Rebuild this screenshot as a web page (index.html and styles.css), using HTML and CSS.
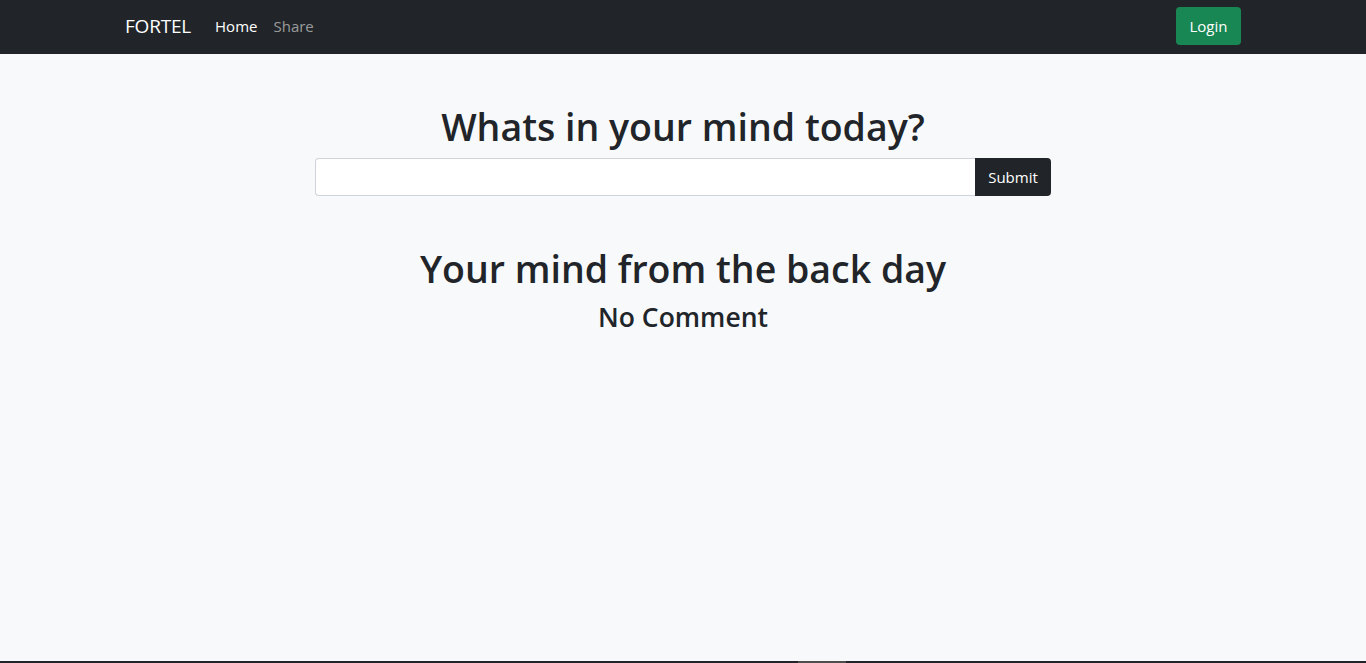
FILE: index.html
```html
<!DOCTYPE html>
<html lang="en">
<head>
<meta charset="utf-8">
<title>FORTEL</title>
<link rel="stylesheet" href="styles.css">
</head>
<body>
<nav class="navbar">
  <div class="container nav-inner">
    <div class="nav-left">
      <a class="brand" href="#">FORTEL</a>
      <a class="nav-link active" href="#">Home</a>
      <a class="nav-link" href="#">Share</a>
    </div>
    <a class="btn btn-login" href="#">Login</a>
  </div>
</nav>
<main class="main">
  <h1 class="title">Whats in your mind today?</h1>
  <form class="post-form">
    <input class="post-input" type="text">
    <button class="btn btn-submit" type="button">Submit</button>
  </form>
  <h1 class="title second">Your mind from the back day</h1>
  <h3 class="empty">No Comment</h3>
</main>
<footer class="footer"><div class="footer-mark"></div></footer>
</body>
</html>
```
FILE: styles.css
```css
* { box-sizing: border-box; }
html, body { margin: 0; padding: 0; }
body {
  height: 663px;
  overflow: hidden;
  display: flex;
  flex-direction: column;
  background: #f8f9fa;
  color: #212529;
  font-family: "Open Sans", "Noto Sans", sans-serif;
  font-size: 16px;
}
a { text-decoration: none; }
.navbar {
  background: #212529;
  padding: 7px 0 9px;
  height: 54px;
  flex: none;
}
.container {
  width: 1140px;
  margin: 0 auto;
  padding: 0 12px;
}
.nav-inner {
  display: flex;
  align-items: center;
  justify-content: space-between;
  height: 38px;
}
.nav-left { display: flex; align-items: center; }
.brand {
  color: #fff;
  font-size: 19px;
  margin-right: 16px;
  letter-spacing: -0.2px;
}
.nav-link {
  color: rgba(255,255,255,0.55);
  padding: 8px;
  font-size: 15px;
}
.nav-link.active { color: #fff; }
.btn {
  display: inline-flex;
  align-items: center;
  justify-content: center;
  height: 38px;
  padding: 0 12px;
  border-radius: 4px;
  font-size: 15px;
  font-family: inherit;
  color: #fff;
  border: none;
}
.btn-login { background: #198754; width: 65px; }
.main {
  flex: 1;
  display: flex;
  flex-direction: column;
  align-items: center;
  padding-top: 49px;
}
.title {
  margin: 0 0 7px;
  font-size: 37.5px;
  font-weight: 600;
  line-height: 48px;
}
.title.second { margin-top: 49px; }
.post-form {
  display: flex;
  width: 736px;
}
.post-input {
  flex: 1;
  height: 38px;
  border: 1px solid #ced4da;
  border-right: none;
  border-radius: 4px 0 0 4px;
  background: #fff;
}
.btn-submit {
  background: #212529;
  width: 76px;
  border-radius: 0 4px 4px 0;
  cursor: pointer;
}
.empty {
  margin: 0;
  font-size: 26.5px;
  font-weight: 600;
  line-height: 34px;
}
.footer {
  flex: none;
  height: 2px;
  background: #212529;
  position: relative;
}
.footer-mark {
  position: absolute;
  left: 798px;
  top: 0;
  width: 48px;
  height: 2px;
  background: #4d4d4d;
}
```
